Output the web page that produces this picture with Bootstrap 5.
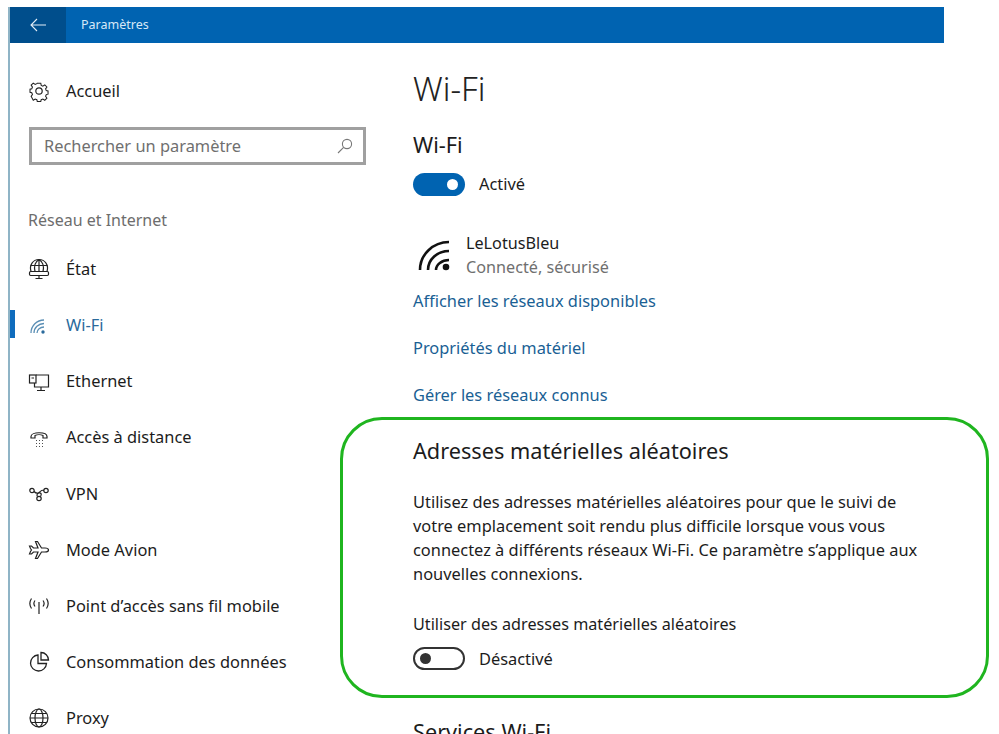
<!DOCTYPE html>
<html lang="fr">

<head>
    <meta charset="UTF-8">
    <meta name="viewport" content="width=device-width, initial-scale=1.0">
    <link href="https://cdn.jsdelivr.net/npm/bootstrap@5.3.2/dist/css/bootstrap.min.css" rel="stylesheet">
    <style>
        html, body { height: 734px; overflow: hidden; background: #fff; }
        body { font-family: "Noto Sans", "Liberation Sans", sans-serif; font-size: 16px; color: #1c1c1c; }
        a { text-decoration: none; }

        .app-shell { width: 944px; height: 734px; padding-top: 7px; overflow: visible; }
        .app-frame { border-left: 2px solid #8fb4c6; margin-left: 8px; height: 727px; }

        .title-bar { height: 36px; background: #0063b1; color: #d6e8f7; font-size: 12.5px; }
        .back-box { width: 56px; background: #004e8c; }
        .title-text { padding-left: 15px; }

        .side-col { width: 331px; padding-left: 18px; flex-shrink: 0; }
        .home-row { margin-top: 36px; height: 24px; }
        .nav-icon { width: 22px; height: 22px; flex-shrink: 0; }
        .nav-label { margin-left: 16px; font-size: 16.4px; }
        .search-box { width: 337px; height: 38px; margin: 24px 0 0 1px; border: 3px solid #a0a0a0; padding: 0 10px 0 12px; color: #6f6f6f; font-size: 16.4px; }
        .side-heading { margin-top: 43px; color: #6d6d6d; font-size: 16px; line-height: 24px; }
        .net-list { margin-top: 9.4px; }
        .net-row { height: 56.1px; position: relative; }
        .net-row.active { color: #2a6a9c; }
        .active-bar { position: absolute; left: -18px; top: 13px; width: 5px; height: 28px; background: #0f6cbd; }

        .main-col { padding-left: 72px; flex-grow: 1; }
        .page-title { font-size: 33px; font-weight: 300; margin: 26px 0 0; line-height: 40px; color: #222; }
        .section-title { font-size: 21.7px; font-weight: 400; margin: 0; line-height: 28px; }
        .wifi-head { margin-top: 22px; }
        .switch-line { margin-top: 13px; }
        .switch-shape { width: 52px; height: 23px; border-radius: 12px; position: relative; flex-shrink: 0; }
        .switch-on { background: #0063b1; }
        .switch-on::after { content: ""; position: absolute; right: 7px; top: 6px; width: 11px; height: 11px; border-radius: 50%; background: #fff; }
        .switch-off { border: 2px solid #333; }
        .switch-off::after { content: ""; position: absolute; left: 5px; top: 4px; width: 11px; height: 11px; border-radius: 50%; background: #333; }
        .switch-label { margin-left: 14px; font-size: 16.4px; }
        .network-row { margin: 34px 0 10px; }
        .network-name { font-size: 16.2px; line-height: 24px; }
        .network-state { font-size: 16.2px; line-height: 24px; color: #6f6f6f; }
        .wifi-big { width: 36px; height: 36px; margin: 0 14px 0 3px; }
        .blue-link { display: block; color: #1a5f94; font-size: 16.4px; line-height: 24px; margin-bottom: 23px; }

        .green-zone { margin-left: -73px; width: 649px; height: 281px; margin-top: -13px; padding: 17px 0 0 70px; border: 3px solid #1fb51f; border-radius: 42px; }
        .zone-text { font-size: 16.4px; line-height: 24px; margin: 25px 0 26px; width: 522px; }
        .zone-label { font-size: 16.2px; line-height: 24px; }
        .zone-switch { margin-top: 11px; }
        .services-title { margin-top: 20px; }
    </style>

    <title>Paramètres</title>
</head>

<body>
    <div class="app-shell">
        <div class="app-frame">
            <div class="title-bar d-flex align-items-stretch">
                <div class="back-box d-flex align-items-center justify-content-center">
                    <svg width="16" height="14" viewBox="0 0 16 14" fill="none" stroke="#e4eef7" stroke-width="1.1"><path d="M16 7H1M7 1L1 7l6 6"/></svg>
                </div>
                <div class="title-text d-flex align-items-center">Paramètres</div>
            </div>

            <div class="d-flex">
                <div class="side-col">
                    <div class="home-row d-flex align-items-center">
                        <svg class="nav-icon" viewBox="0 0 22 22" fill="none" stroke="#222" stroke-width="1.2"><circle cx="11" cy="11" r="3.2"/><path d="M9 2h4l.5 2.6 1.9.8 2.2-1.5 2.4 2.5-1.5 2.2.8 1.9 2 .5v3.6l-2 .5-.8 1.9 1.5 2.2-2.4 2.4-2.2-1.5-1.9.8-.5 2H9l-.5-2-1.9-.8-2.2 1.5L2 17.1l1.5-2.2-.8-1.9-2-.5V8.9l2-.5.8-1.9L2 4.3l2.4-2.4 2.2 1.5 1.9-.8z" transform="translate(1.4 1.4) scale(.875)"/></svg>
                        <span class="nav-label">Accueil</span>
                    </div>

                    <div class="search-box d-flex align-items-center justify-content-between">
                        <span>Rechercher un paramètre</span>
                        <svg width="16" height="16" viewBox="0 0 16 16" fill="none" stroke="#777" stroke-width="1.1"><circle cx="10" cy="6" r="4.6"/><path d="M6.6 9.4L1 15"/></svg>
                    </div>

                    <div class="side-heading">Réseau et Internet</div>

                    <div class="net-list">
                        <div class="net-row d-flex align-items-center">
                            <svg class="nav-icon" viewBox="0 0 22 22" fill="none" stroke="#222" stroke-width="1.2"><path d="M3 13.500C1 7 5 1.500 11 1.500S21 7 19 13.500"/><path d="M11 1.500V13.500M2.500 7.500h17M11 1.500C7 4 6 9 7 13.500M11 1.500c4 2.500 5 7.500 4 12"/><rect x="1.500" y="13.500" width="19" height="4" rx="1.200"/><path d="M7.500 20.500h7M11 17.500v3"/></svg>
                            <span class="nav-label">État</span>
                        </div>
                        <div class="net-row active d-flex align-items-center">
                            <span class="active-bar"></span>
                            <svg class="nav-icon" viewBox="0 0 22 22" fill="none" stroke="#5b8fb5" stroke-width="1.300"><path d="M3 18A13 13 0 0 1 16 5M6 18A10 9.500 0 0 1 16 8.500M9 18A7 6 0 0 1 16 12"/><circle cx="15" cy="17" r="1.700" fill="#2a6a9c" stroke="none"/></svg>
                            <span class="nav-label">Wi-Fi</span>
                        </div>
                        <div class="net-row d-flex align-items-center">
                            <svg class="nav-icon" viewBox="0 0 22 22" fill="none" stroke="#222" stroke-width="1.200"><path d="M8 4h12.500v12H6.500V12"/><rect x="1.500" y="4" width="6.500" height="8"/><path d="M3.500 7h2.500M13 16v3M9 19.500h8"/></svg>
                            <span class="nav-label">Ethernet</span>
                        </div>
                        <div class="net-row d-flex align-items-center">
                            <svg class="nav-icon" viewBox="0 0 22 22" fill="none" stroke="#222" stroke-width="1.200"><path d="M3 9.500C3 4.500 19 4.500 19 9.500v1.500h-4V8.500c-2-1-6-1-8 0V11H3z"/><path d="M8 13.500h.8M11 13.500h.8M14 13.500h.8M8 16.500h.8M11 16.500h.8M14 16.500h.8M8 19.500h.8M11 19.500h.8M14 19.500h.8"/></svg>
                            <span class="nav-label">Accès à distance</span>
                        </div>
                        <div class="net-row d-flex align-items-center">
                            <svg class="nav-icon" viewBox="0 0 22 22" fill="none" stroke="#222" stroke-width="1.200"><circle cx="4" cy="7.500" r="2.200"/><circle cx="18" cy="7.500" r="2.200"/><circle cx="11" cy="15.500" r="2.200"/><path d="M6 8.500c2 2 3 2.500 5 1s3-3 5-2M9.500 13.500c-1-1.500-.5-3 1.500-3.500s3 1 1.500 3.500"/></svg>
                            <span class="nav-label">VPN</span>
                        </div>
                        <div class="net-row d-flex align-items-center">
                            <svg class="nav-icon" viewBox="0 0 22 22" fill="none" stroke="#222" stroke-width="1.200"><path d="M20.500 11c0-1.200-2-2-3.500-2h-3.500L9.500 2.500H7.500L10 9H5.500L3.500 7H1.500l1 2.500L3.500 11l-1 1.500-1 2.500h2l2-2H10l-2.500 6.500h2L13.500 13H17c1.500 0 3.500-.8 3.500-2z"/></svg>
                            <span class="nav-label">Mode Avion</span>
                        </div>
                        <div class="net-row d-flex align-items-center">
                            <svg class="nav-icon" viewBox="0 0 22 22" fill="none" stroke="#222" stroke-width="1.200"><path d="M11 7v12M7 5.500c-1.500 2-1.500 4 0 6M15 5.500c1.500 2 1.500 4 0 6M3.500 3.500c-2 3-2 7 0 10M18.500 3.500c2 3 2 7 0 10"/></svg>
                            <span class="nav-label">Point d’accès sans fil mobile</span>
                        </div>
                        <div class="net-row d-flex align-items-center">
                            <svg class="nav-icon" viewBox="0 0 22 22" fill="none" stroke="#222" stroke-width="1.300"><path d="M10 4a8 8 0 1 0 8.500 8.500H10z"/><path d="M13 1.500a7.500 7.500 0 0 1 7.500 7.500H13z"/></svg>
                            <span class="nav-label">Consommation des données</span>
                        </div>
                        <div class="net-row d-flex align-items-center">
                            <svg class="nav-icon" viewBox="0 0 22 22" fill="none" stroke="#222" stroke-width="1.200"><circle cx="11" cy="11" r="9"/><ellipse cx="11" cy="11" rx="4" ry="9"/><path d="M2 11h18M3.200 6.500h15.600M3.200 15.500h15.600"/></svg>
                            <span class="nav-label">Proxy</span>
                        </div>
                    </div>
                </div>

                <div class="main-col">
                    <h1 class="page-title">Wi-Fi</h1>
                    <h2 class="section-title wifi-head">Wi-Fi</h2>
                    <div class="d-flex align-items-center switch-line">
                        <div class="switch-shape switch-on"></div>
                        <span class="switch-label">Activé</span>
                    </div>

                    <div class="network-row d-flex align-items-center">
                        <svg class="wifi-big" viewBox="0 0 36 36" fill="none" stroke="#111" stroke-width="2.600"><path d="M4 33A29 28 0 0 1 33 5M12 33A21 19 0 0 1 33 14M20 33A13 10 0 0 1 33 23"/><circle cx="30" cy="30" r="3.300" fill="#111" stroke="none"/></svg>
                        <div>
                            <div class="network-name">LeLotusBleu</div>
                            <div class="network-state">Connecté, sécurisé</div>
                        </div>
                    </div>

                    <a class="blue-link" href="#">Afficher les réseaux disponibles</a>
                    <a class="blue-link" href="#">Propriétés du matériel</a>
                    <a class="blue-link" href="#">Gérer les réseaux connus</a>

                    <div class="green-zone">
                        <h2 class="section-title">Adresses matérielles aléatoires</h2>
                        <p class="zone-text">Utilisez des adresses matérielles aléatoires pour que le suivi de votre emplacement soit rendu plus difficile lorsque vous vous connectez à différents réseaux Wi-Fi. Ce paramètre s’applique aux nouvelles connexions.</p>
                        <div class="zone-label">Utiliser des adresses matérielles aléatoires</div>
                        <div class="d-flex align-items-center zone-switch">
                            <div class="switch-shape switch-off"></div>
                            <span class="switch-label">Désactivé</span>
                        </div>
                    </div>

                    <h2 class="section-title services-title">Services Wi-Fi</h2>
                </div>
            </div>
        </div>
    </div>

    <script src="https://cdn.jsdelivr.net/npm/bootstrap@5.3.2/dist/js/bootstrap.bundle.min.js"></script>
</body>

</html>
